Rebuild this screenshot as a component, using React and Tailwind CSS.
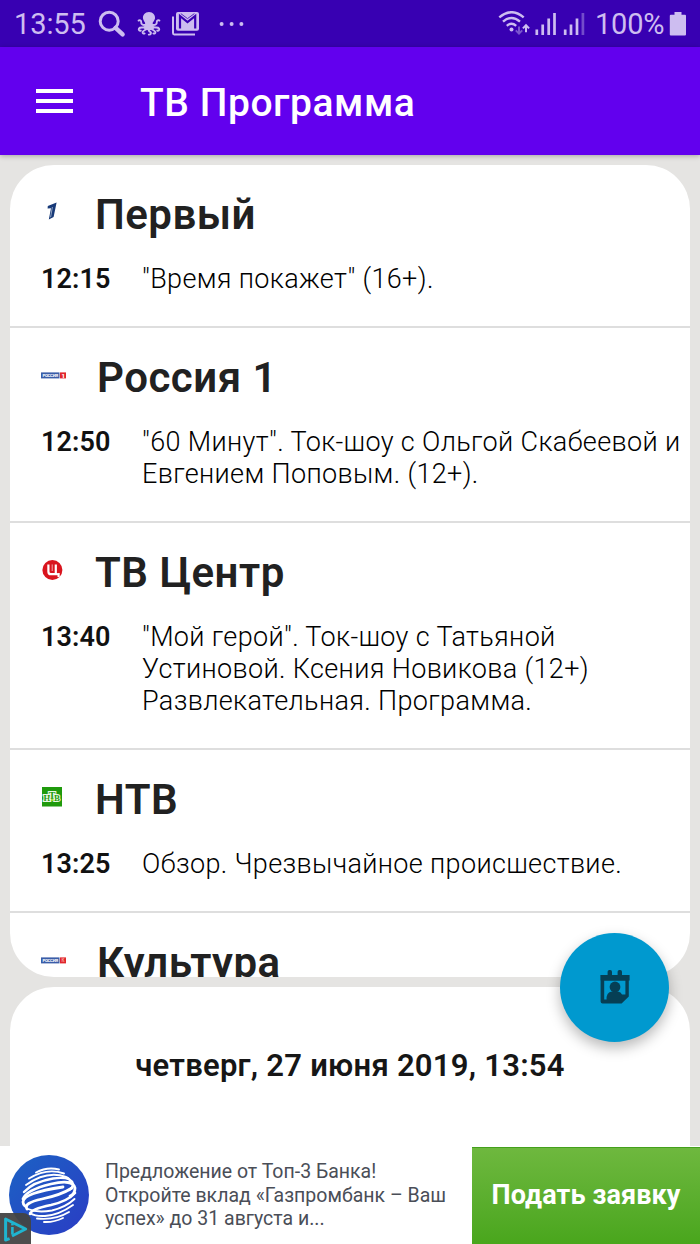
const channels = [
  {
    logo: FirstLogo,
    name: "Первый",
    time: "12:15",
    lines: ['"Время покажет" (16+).'],
  },
  {
    logo: RussiaLogo,
    name: "Россия 1",
    wideLogo: true,
    time: "12:50",
    lines: ['"60 Минут". Ток-шоу с Ольгой Скабеевой и', "Евгением Поповым. (12+)."],
  },
  {
    logo: CenterLogo,
    name: "ТВ Центр",
    time: "13:40",
    lines: [
      '"Мой герой". Ток-шоу с Татьяной',
      "Устиновой. Ксения Новикова (12+)",
      "Развлекательная. Программа.",
    ],
  },
  {
    logo: NtvLogo,
    name: "НТВ",
    time: "13:25",
    lines: ["Обзор. Чрезвычайное происшествие."],
  },
  {
    logo: KulturaLogo,
    name: "Культура",
    wideLogo: true,
    lines: [],
  },
];

function FirstLogo() {
  return (
    <svg width="26" height="26" viewBox="0 0 26 26">
      <path d="M6.8 7 L15.6 3.6 L12.6 18 L7.8 20.4 L10 9.2 L6.6 9.6 Z" fill="#183a78" />
      <path d="M11.4 8 L9.6 18.2" fill="none" stroke="#c9d3e4" strokeWidth="0.7" />
    </svg>
  );
}

function RussiaLogo() {
  return (
    <svg width="26" height="26" viewBox="0 0 26 26">
      <rect x="0" y="10.4" width="18.5" height="6" fill="#3a5da8" />
      <rect x="19" y="10.4" width="6" height="6" fill="#e0262c" />
      <text x="1.4" y="15" fontSize="4.4" fontWeight="700" fill="#fff" textLength="15.6" fontFamily="Roboto, sans-serif">РОССИЯ</text>
      <text x="20.4" y="15.6" fontSize="6" fontWeight="900" fill="#fff" fontFamily="Roboto, sans-serif">1</text>
    </svg>
  );
}

function KulturaLogo() {
  return (
    <svg width="26" height="26" viewBox="0 0 26 26">
      <rect x="0" y="10.4" width="18.5" height="6" fill="#3a5da8" />
      <rect x="19" y="10.4" width="6" height="6" fill="#e0262c" />
      <text x="1.4" y="15" fontSize="4.4" fontWeight="700" fill="#fff" textLength="15.6" fontFamily="Roboto, sans-serif">РОССИЯ</text>
      <text x="20.6" y="15.2" fontSize="4.6" fontWeight="700" fill="#f7a8a8" fontFamily="Roboto, sans-serif">К</text>
    </svg>
  );
}

function CenterLogo() {
  return (
    <svg width="26" height="26" viewBox="0 0 26 26">
      <circle cx="11.4" cy="13" r="10" fill="#d9141e" />
      <path d="M7.4 7.4 V14.4 Q7.4 17.2 10 17.2 H15 M14.8 7.4 V16 Q15 17.4 17.6 17.2 V20" fill="none" stroke="#fff" strokeWidth="2.2" />
      <path d="M11.2 7.4 V14" fill="none" stroke="#f4a5a8" strokeWidth="1" />
    </svg>
  );
}

function NtvLogo() {
  return (
    <svg width="26" height="26" viewBox="0 0 26 26">
      <rect x="1" y="3" width="20" height="19.5" fill="#1f9a0c" />
      <g fontFamily="Liberation Serif, serif" fontWeight="700" fill="#1f9a0c" stroke="#e9f7e4" strokeWidth="2" paintOrder="stroke">
        <text x="2.6" y="17" fontSize="8.8">Н</text>
        <text x="13" y="17" fontSize="8.8">В</text>
        <text x="7.8" y="14.6" fontSize="10">Т</text>
      </g>
      <circle cx="11.3" cy="16" r="1.3" fill="#a6dc2b" />
    </svg>
  );
}

function StatusBar() {
  return (
    <div className="flex h-[47px] items-center bg-[#3800b2] text-[29px] text-[#cdbdf0]">
      <span className="ml-[14px] w-[73px] pt-[2px] tracking-[-0.1px]">13:55</span>
      <svg className="ml-[10px] shrink-0" width="30" height="30" viewBox="0 0 30 30" fill="none" stroke="currentColor">
        <circle cx="12.2" cy="12.2" r="9" strokeWidth="3" />
        <path d="M18.6 18.8 L25.6 25.4" strokeWidth="4.4" strokeLinecap="round" />
      </svg>
      <svg className="ml-[10px] shrink-0" width="24" height="26" viewBox="0 0 24 26" fill="none" stroke="currentColor" strokeWidth="1.9" strokeLinecap="round">
        <path d="M12 1 C8 1 5.6 4 6 7.4 C6.3 9.8 8.4 11 8.2 12.6 L6.6 17.4 L10 19 H14 L17.2 17.4 L15.6 12.6 C15.4 11 17.6 9.8 18 7.4 C18.4 4 16 1 12 1 Z" fill="currentColor" stroke="none" />
        <path d="M8.8 13.5 C6.5 14.6 3.8 13.6 4.2 11 C4.3 9.4 2.6 8.8 1.6 9.6" />
        <path d="M15 13.5 C17.4 14.6 20.2 13.6 19.8 11 C19.7 9.4 21.4 8.8 22.4 9.6" />
        <path d="M9 15.5 C6.5 17.6 3.2 15.4 2 17.4 C1.2 19 2.6 20.2 3.8 19.6" />
        <path d="M15 15.5 C17.5 17.6 20.8 15.4 22 17.4 C22.8 19 21.4 20.2 20.2 19.6" />
        <path d="M9.6 16.5 C9.8 19.6 6 18.8 5.6 21.2 C5.6 22.4 6.6 23 7.6 22.4" />
        <path d="M14.6 16.5 C14.2 19.6 18 18.8 18.4 21.2 C18.4 22.4 17.4 23 16.4 22.4" />
        <path d="M11.5 16.5 C11.4 19 12 20.6 13.4 21 C14.6 22 13.8 23.8 11.8 23.6" />
      </svg>
      <svg className="ml-[10px] shrink-0" width="30" height="26" viewBox="0 0 30 26">
        <path d="M2 5.5 V22 Q2 23.4 3.2 23.4 H24" fill="none" stroke="currentColor" strokeWidth="2" />
        <path d="M7 1 H26 Q28 1 28 3 V17.8 Q28 19.8 26 19.8 H7 Q5 19.8 5 17.8 V3 Q5 1 7 1 Z" fill="currentColor" />
        <path d="M9 17.4 V5 L16.5 11.2 L24.2 5 V17.4" fill="none" stroke="#3800b2" strokeWidth="2.2" />
        <path d="M9.8 2.6 L16.5 7.6 L23.4 2.6" fill="none" stroke="#3800b2" strokeWidth="0.8" />
      </svg>
      <svg className="ml-[18px] shrink-0" width="26" height="6" viewBox="0 0 26 6" fill="currentColor">
        <circle cx="2.6" cy="3" r="2" />
        <circle cx="12.6" cy="3" r="2" />
        <circle cx="22.4" cy="3" r="2" />
      </svg>
      <svg className="mt-px ml-auto shrink-0" width="90" height="26" viewBox="0 0 90 26" fill="none" stroke="currentColor">
        <path d="M1.3 6.4 Q13.5 -4 25.7 6.4" strokeWidth="2.4" />
        <path d="M5 10.6 Q13.5 3.2 22 10.6" strokeWidth="2.4" />
        <path d="M8.8 14.8 Q13.5 10.8 18.2 14.8" strokeWidth="2.4" />
        <circle cx="13.5" cy="18.4" r="2" fill="currentColor" stroke="none" />
        <path d="M21 15.5 V22 M17.8 19.4 L21 22.6 L24.2 19.4" strokeWidth="2" opacity="0.45" />
        <path d="M28 21.2 V14.6 M24.9 17.4 L28 14.2 L31.1 17.4" strokeWidth="2" />
        <path d="M38.8 18.6 V24 M44.7 13.6 V24 M50.7 7.6 V24 M56.5 2 V24" strokeWidth="2.7" />
        <path d="M67.2 18.6 V24 M73 13.6 V24 M79 7.6 V24" strokeWidth="2.7" />
        <path d="M84.9 2 V24" strokeWidth="2.7" opacity="0.4" />
      </svg>
      <span className="ml-[7px] w-[69px] pt-[2px] tracking-[-0.2px]">100%</span>
      <svg className="mr-[13px] ml-[5px] shrink-0" width="18" height="24" viewBox="0 0 18 24" fill="currentColor">
        <path d="M5.5 0 H12.5 V2.8 H16 Q17 2.8 17 3.8 V22.6 Q17 23.6 16 23.6 H1.8 Q0.8 23.6 0.8 22.6 V3.8 Q0.8 2.8 1.8 2.8 H5.5 Z" />
      </svg>
    </div>
  );
}

function AppBar() {
  return (
    <header className="relative z-10 flex h-[108px] items-center bg-[#6200ee] text-white shadow-[0_1px_5px_rgba(0,0,0,0.28)]">
      <button className="ml-9 flex w-[37px] flex-col gap-[6px]">
        <span className="h-1 w-full bg-white" />
        <span className="h-1 w-full bg-white" />
        <span className="h-1 w-full bg-white" />
      </button>
      <h1 className="ml-[67px] pt-[4px] text-[39px] leading-none font-medium tracking-[0.55px]">ТВ Программа</h1>
    </header>
  );
}

function ChannelRow({ channel }) {
  const Logo = channel.logo;

  return (
    <div className="shrink-0 border-b-2 border-[#dedede] pt-[25px] pb-[31px]">
      <div className="flex h-[50px] pl-[31px]">
        <span className={channel.wideLogo ? "w-[56px] pt-[9px]" : "w-[54px] pt-[9px]"}>
          <Logo />
        </span>
        <h2 className="text-[42px] leading-[49px] font-semibold tracking-[0.5px] whitespace-nowrap text-[#212121]">
          {channel.name}
        </h2>
      </div>
      <div className="mt-[23px] flex text-[27px] leading-8 text-[#111]">
        <span className="w-[132px] shrink-0 pl-[31px] font-semibold tracking-[0.1px]">{channel.time}</span>
        <p className="font-[350] tracking-[0.36px] whitespace-nowrap text-black">
          {channel.lines.map((line) => (
            <span key={line} className="block">{line}</span>
          ))}
        </p>
      </div>
    </div>
  );
}

function ScheduleButton() {
  return (
    <button className="absolute top-[933px] left-[560px] z-20 flex size-[109px] items-center justify-center rounded-full bg-[#0099cf] shadow-[0_6px_14px_rgba(0,0,0,0.28)]">
      <svg className="-mt-px" width="30" height="34" viewBox="0 0 30 34" fill="#063f55">
        <rect x="7.6" y="0" width="4.4" height="7" rx="1.8" />
        <rect x="17.6" y="0" width="4.4" height="7" rx="1.8" />
        <path fillRule="evenodd" d="M0.4 5 H29.6 V10.4 H28.8 V26.4 L21.6 33.6 H2.6 Q0.6 33.6 0.6 31.6 V10.4 H0.4 Z M4.2 10.8 V29.6 H20.6 V24.4 H25.4 V10.8 Z" />
        <circle cx="15" cy="17" r="5.4" />
        <path d="M6.6 30 Q6 22 12 21.4 H18 Q21 21.8 22 24.6 L21 30 Z" />
      </svg>
    </button>
  );
}

function BankLogo() {
  return (
    <svg width="80" height="80" viewBox="0 0 80 80">
      <defs>
        <linearGradient id="bank" x1="0" y1="0" x2="1" y2="1">
          <stop offset="0" stopColor="#1c62c4" />
          <stop offset="1" stopColor="#2a3cc4" />
        </linearGradient>
      </defs>
      <circle cx="40" cy="40" r="40" fill="url(#bank)" />
      <g fill="none" stroke="#fff" strokeLinecap="round" strokeWidth="1.9">
        <path d="M27 17.5 Q38 11.5 50 14.5" />
        <path d="M20 23.5 Q38 12.5 55 18.5" />
        <path d="M17 30 Q38 15 57 22 Q62 24 61 28" />
        <path d="M15 37 Q24 27 44 23.5 Q62 21 64 29 Q64 33 60 35" strokeWidth="2.4" />
        <path d="M14 44 Q17 35 42 29 Q64 24 66 33 Q66 39 61 41" strokeWidth="2.8" />
        <path d="M63 33 Q52 40 33 44 Q14 48 18 54" strokeWidth="2.8" />
        <path d="M54 32 Q14 38 14 47 Q14 49 16 51" strokeWidth="2.8" />
        <path d="M66 38 Q59 46 42 50 Q22 54 21 59" strokeWidth="2.6" />
        <path d="M65.5 44 Q57 52 43 55.5 Q28 58 19 54" />
        <path d="M64 50 Q50 60 36 61 Q26 61.5 21 58" />
        <path d="M60 57 Q46 65.5 28 63.5" />
        <path d="M54 63 Q45 67.5 35 67" />
      </g>
    </svg>
  );
}

function AdBanner() {
  return (
    <aside className="relative flex h-[98px] shrink-0 bg-white">
      <div className="ml-[9px] pt-[9px]">
        <BankLogo />
      </div>
      <p className="ml-4 pt-[14px] text-[19.5px] leading-[23.5px] whitespace-nowrap text-[#4a4e57]">
        Предложение от Топ-3 Банка!
        <br />
        Откройте вклад «Газпромбанк – Ваш
        <br />
        успех» до 31 августа и...
      </p>
      <button className="mt-px ml-auto w-[228px] border-t border-[#44a01c] bg-linear-to-b from-[#6eb83e] to-[#49a61c] pb-[2px] text-[27px] font-bold tracking-[0.1px] whitespace-nowrap text-white">
        Подать заявку
      </button>
      <span className="absolute bottom-0 left-0 flex h-[31px] w-[31px] items-center rounded-tr-[8px] bg-[#434343]/95 pl-[3px]">
        <svg width="26" height="26" viewBox="0 0 26 26" fill="none" stroke="#1fb5d0" strokeWidth="3" strokeLinejoin="round">
          <path d="M6.6 22.6 L2.6 24 V3 L22.6 13 L9 20" />
          <path d="M9.4 11 V18.4" strokeWidth="2.6" />
          <path d="M9.4 7.4 V9.4" strokeWidth="2.6" />
        </svg>
      </span>
    </aside>
  );
}

export default function App() {
  return (
    <div className="relative flex h-[1244px] w-[700px] flex-col overflow-hidden bg-[#e5e4e2] font-[Roboto,sans-serif]">
      <StatusBar />
      <AppBar />

      <main className="flex min-h-0 flex-1 flex-col gap-[10px] px-[10px] pt-[10px]">
        <section className="flex h-[812px] shrink-0 flex-col overflow-hidden rounded-[44px] bg-white">
          {channels.map((channel) => (
            <ChannelRow key={channel.name} channel={channel} />
          ))}
        </section>

        <section className="flex-1 rounded-t-[44px] bg-white pt-[61px] text-center text-[31px] leading-9 font-semibold tracking-[0.25px] text-[#161616]">
          четверг, 27 июня 2019, 13:54
        </section>
      </main>

      <AdBanner />
      <ScheduleButton />
    </div>
  );
}
